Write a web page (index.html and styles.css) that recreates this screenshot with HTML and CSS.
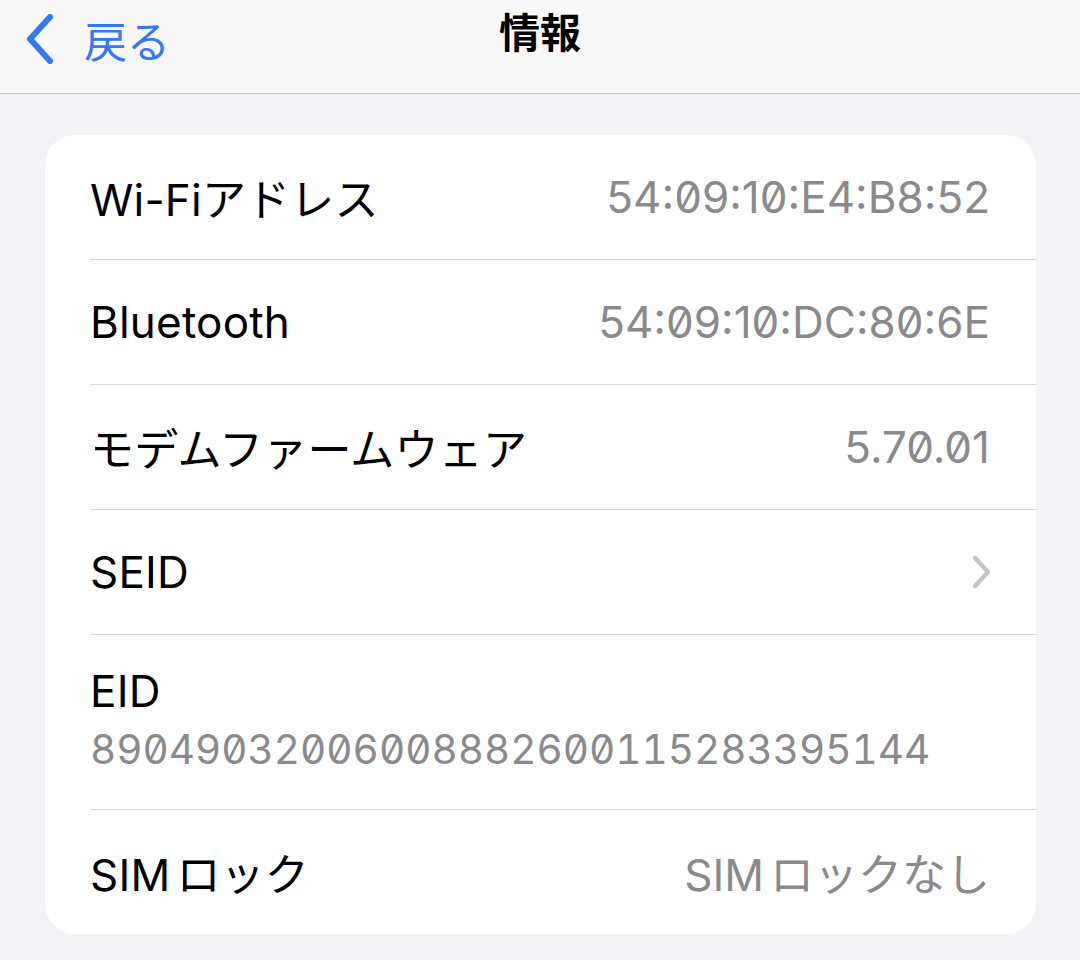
FILE: index.html
```html
<html>
<head>
  <title>情報</title>
  <meta charset="utf-8">
  <link rel="stylesheet" href="styles.css">
</head>
<body>

<div class="nav-bar">
  <div class="nav-back">
    <svg class="back-icon" width="34" height="50" viewBox="0 0 34 50">
      <path d="M28 3 L8 25 L28 47" fill="none" stroke="#3478f6" stroke-width="6" stroke-linecap="round" stroke-linejoin="round"/>
    </svg>
    <span>戻る</span>
  </div>
  <div class="nav-title">情報</div>
</div>

<div class="content">
  <div class="card">
    <div class="row">
      <div class="label">Wi-Fiアドレス</div>
      <div class="value">54:09:10:E4:B8:52</div>
    </div>
    <div class="row">
      <div class="label">Bluetooth</div>
      <div class="value">54:09:10:DC:80:6E</div>
    </div>
    <div class="row">
      <div class="label">モデムファームウェア</div>
      <div class="value">5.70.01</div>
    </div>
    <div class="row">
      <div class="label">SEID</div>
      <svg class="chevron" width="22" height="36" viewBox="0 0 22 36">
        <path d="M4 4 L17 18 L4 32" fill="none" stroke="#c4c4c7" stroke-width="4.5" stroke-linecap="round" stroke-linejoin="round"/>
      </svg>
    </div>
    <div class="row row-stack">
      <div class="label">EID</div>
      <div class="value">89049032006008882600115283395144</div>
    </div>
    <div class="row">
      <div class="label">SIM<span class="gap"></span>ロック</div>
      <div class="value">SIM<span class="gap"></span>ロックなし</div>
    </div>
  </div>
</div>

</body>
</html>
```

FILE: styles.css
```css
/* page */
body {
  margin: 0;
  background-color: #f2f2f7;
  font-family: Inter, 'Noto Sans CJK JP', sans-serif;
  color: #000000;
}

/* navigation bar */
.nav-bar {
  height: 93px;
  background-color: #f8f8f8;
  border-bottom: 1px solid #c6c6c8;
  display: flex;
  align-items: center;
  justify-content: center;
  position: relative;
}

.nav-back {
  position: absolute;
  left: 22px;
  top: 8px;
  display: flex;
  align-items: center;
  gap: 28px;
  color: #3478f6;
  font-size: 43px;
  font-family: 'Noto Sans CJK JP', sans-serif;
}

.nav-title {
  font-family: 'Noto Sans CJK JP', sans-serif;
  font-size: 41px;
  font-weight: bold;
  margin-top: -34px;
}

/* list card */
.content {
  padding: 41px 44px 0 45px;
}

.card {
  background-color: #ffffff;
  border-radius: 30px;
  overflow: hidden;
}

.row {
  height: 124px;
  margin-left: 45px;
  padding-right: 46px;
  border-bottom: 1px solid #d8d8dc;
  display: flex;
  align-items: center;
  justify-content: space-between;
  font-size: 44px;
}

.row:last-child {
  border-bottom: none;
}

.row-stack {
  height: auto;
  flex-direction: column;
  align-items: flex-start;
  padding-top: 28px;
  padding-bottom: 28px;
}

.label {
  letter-spacing: 0.2px;
}

.value {
  color: #8a8a8e;
  font-feature-settings: "zero";
}

.gap {
  display: inline-block;
  width: 6px;
}

.row-stack .label {
  line-height: 56px;
}

.row-stack .value {
  line-height: 62px;
  font-feature-settings: "zero", "tnum";
  font-size: 40.5px;
}

.chevron {
  margin-right: -3px;
}
```
